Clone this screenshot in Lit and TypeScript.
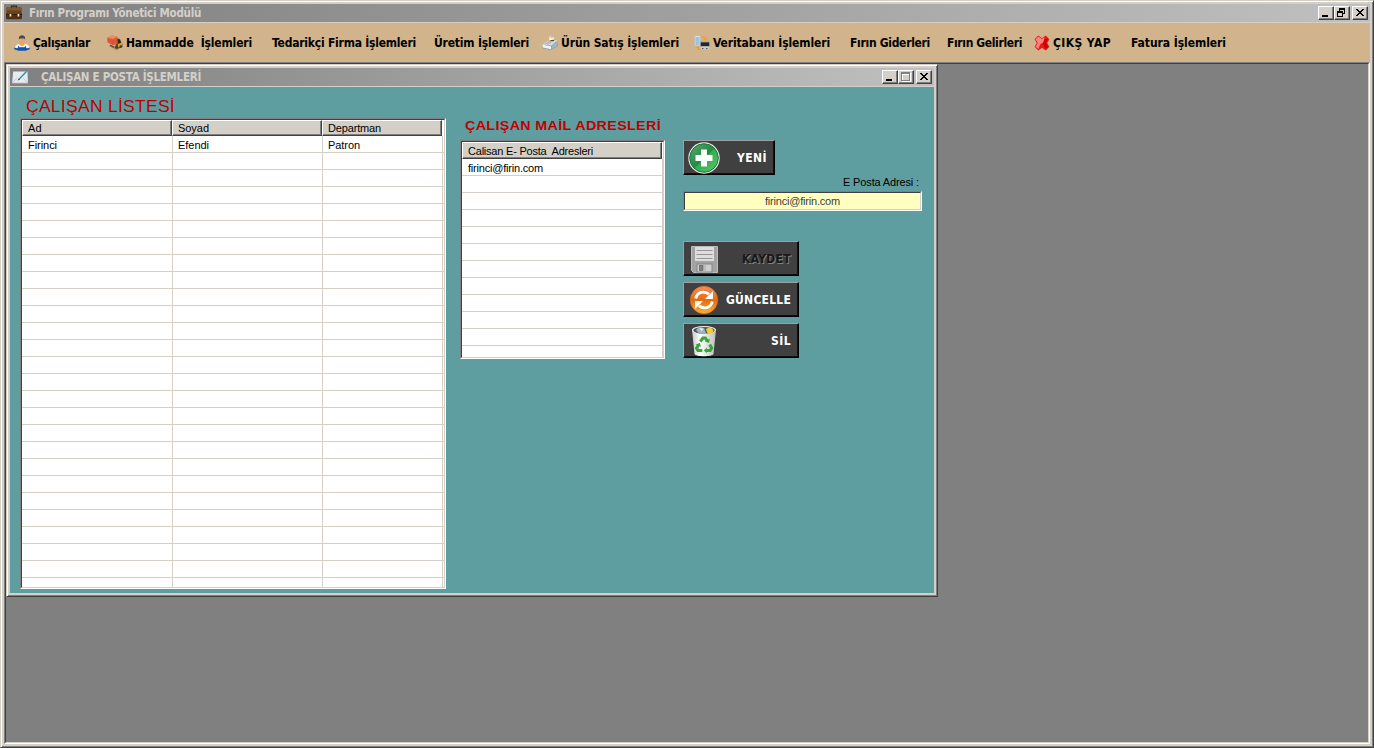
import { LitElement, html, css, svg, nothing } from "lit";
import { customElement, property } from "lit/decorators.js";

/** A line of text whose tracking is adjusted so that it takes up a given width; stretch widens the glyphs first. */
@customElement("fit-label")
class FitLabel extends LitElement {
  @property() text = "";
  @property({ type: Number }) w = 0;
  @property({ type: Number }) stretch = 1;

  static styles = css`
    :host { display: block; flex: none; white-space: pre; }
    .t { display: inline-block; white-space: pre; transform-origin: 0 50%; }
  `;

  firstUpdated() {
    const el = this.renderRoot.querySelector(".t") as HTMLElement;
    const natural = el.getBoundingClientRect().width;
    el.style.letterSpacing = `${(this.w / this.stretch - natural) / this.text.length}px`;
    if (this.stretch !== 1) el.style.transform = `scaleX(${this.stretch})`;
  }

  render() {
    return html`<span class="t">${this.text}</span>`;
  }
}

const icons: Record<string, unknown> = {
  briefcase: svg`
    <path d="M5.500 3V1.200h5V3" fill="none" stroke="#3a2412" stroke-width="1.200"/>
    <rect x="0" y="2.500" width="16" height="11.800" rx="1.200" fill="#4e3018"/>
    <rect x="0" y="2.500" width="16" height="6" rx="1.200" fill="#80592f"/>
    <rect x="1" y="5.500" width="14" height="3.500" fill="#65431f"/>
    <path d="M0 9.500h16" stroke="#2c1808" stroke-width=".8"/>
    <rect x="3.600" y="9" width="1.700" height="2.500" fill="#ffe4b0"/><rect x="11.600" y="9" width="1.700" height="2.500" fill="#ffe4b0"/>`,
  worker: svg`
    <path d="M1 13.500c0-3 2-4.500 4.500-4.800h5c3 .3 5 1.800 5 4.800l-1 1.500h-12.500z" fill="#f1f4f7"/>
    <path d="M4.200 10.500l1.300 1.700h5l1.300-1.700 .9 5h-9.400z" fill="#1a5fb8"/>
    <path d="M.3 12.500c2 1 4 1 5 .3h6c2 .6 3 .5 4.400-.3v1.700c-2 1.700-13.400 1.700-15.400 0z" fill="#0d56b0"/>
    <path d="M5.500 7h5v3L8 11.300 5.500 10z" fill="#e8ac3e"/>
    <rect x="5.200" y="1" width="5.600" height="7.500" rx="2.600" fill="#dca77c"/>
    <path d="M4.900 4.500V3c0-3.700 6.200-3.700 6.200 0v1.500l-1-1H5.900z" fill="#4a4b4a"/>`,
  forklift: svg`
    <path d="M2 11l8 4.500 1-2-4-3z" fill="#8a7a62" opacity=".7"/>
    <path d="M9 3l4 1 1.500 4 1 1v3l-5 2-2-3z" fill="#6a4b1a"/>
    <path d="M10.500 4l2.500 1 1 3-2 2z" fill="#2b2620"/>
    <path d="M11 9l4-1.500v3l-4 2z" fill="#dba233"/>
    <circle cx="9.500" cy="12.300" r="1.500" fill="#4d3a28"/><circle cx="13.800" cy="11.500" r="1.200" fill="#3b352c"/>
    <path d="M.2 2.500L5 .6l5.400 1.200v6.700L6 10.200.5 7.500z" fill="#e05a38"/>
    <path d="M.2 2.500L5 .6l5.400 1.200L6 4z" fill="#f28a6a"/>
    <path d="M6 4v6M.5 5L6 7l4.400-2" stroke="#c9482c" stroke-width=".5" fill="none"/>
    <path d="M3 10l4 2.500" stroke="#5b4634" stroke-width="1.300"/>`,
  register: svg`
    <path d="M0 11l7-4h9v4l-7 4L1 13.500z" fill="#8d9bab"/>
    <path d="M.5 9.500L6 6l9.500-1-6 5.500z" fill="#d5dde6"/>
    <path d="M.5 9.700l8.500 1.500v3L.7 12.500z" fill="#eef2f6"/>
    <path d="M9.500 10.800l6-4.500v4l-6 4z" fill="#a6b4c3"/>
    <path d="M7.500 1.500l4.500.5-.5 4-4.500.5z" fill="#fafafa"/>
    <path d="M6.500 5.500L14 4l-3 3-4 .5z" fill="#e1b435"/>
    <path d="M8.500 5.500h3.500" stroke="#494c50"/><path d="M8.500 2.500l3 .3" stroke="#e3b540"/>
    <path d="M3 9l4-2M5 9.500l4-2" stroke="#8fa1b4" stroke-width=".8"/>`,
  database: svg`
    <rect x="1" y="1" width="5" height="9.500" fill="#e6eef5" stroke="#b9c8d4" stroke-width=".7"/>
    <path d="M1.500 3h4M1.500 5h4M1.500 7h4M1.500 9h4" stroke="#4b9fd6"/>
    <rect x="6.500" y="7" width="9" height="4.500" fill="#25272a" stroke="#999" stroke-width=".8"/>
    <rect x="6.500" y="11.500" width="9" height="2.800" fill="#c8cdd2"/><path d="M8 13.500h1.500M12 13.500h1.500" stroke="#555" stroke-width="1.200"/>
    <path d="M7.500 1.500H10c2 0 2.500 1 2.500 2H14l-2.500 2.500L8.700 4h1.600c0-1-1-.9-2.800-.9z" fill="#f3a21c"/>
    <path d="M6.500 15c-3 .3-3.500-.7-3.700-2H1.500l2.300-2.200L6 13H4.700c.1.700.8.700 1.800.6z" fill="#f3a21c"/>`,
  cross: svg`
    <path d="M4.300.6L8 3.200 11.700.6l3.700 3.600L13.200 8l2.200 3.800-3.700 3.600L8 12.800l-3.700 2.600L.6 11.800 2.800 8 .6 4.200z" fill="#e01a1a"/>
    <path d="M4.400 1.400L8 4l2.500-1.700L9.500 7 6 9.500 4.500 14 1.500 11.700 3.800 8 1.500 4.300z" fill="#ff8080"/>
    <path d="M9 8l2-4 3-.2L12 8l2.500 4-3 2-2-3.500z" fill="#d00000"/>`,
  letter: svg`
    <path d="M1.200 2.500h14.300l.4 11.500H.1z" fill="#e6ebee"/>
    <path d="M.2 13.800L5.300 9M15.700 13.800L11 9" stroke="#b6c2ca" stroke-width=".8"/>
    <path d="M0 14.200h16" stroke="#aab2b8" stroke-width=".8"/>
    <path d="M6.300 10.500l1-1.500L14 2l1.200.8-6.800 7z" fill="#2a86c2"/><path d="M5.500 11.500l1.500-2 1.200 1z" fill="#333"/>`,
  plus: svg`
    <defs><linearGradient id="g" x1="0" y1="0" x2="1" y2="1"><stop offset="0" stop-color="#58a870"/><stop offset=".5" stop-color="#248a40"/><stop offset=".51" stop-color="#36a850"/><stop offset="1" stop-color="#5acb68"/></linearGradient></defs>
    <circle cx="16" cy="16" r="15.700" fill="#e9f3ea"/><circle cx="16" cy="16" r="14.300" fill="url(#g)" stroke="#14763a" stroke-width="1"/>
    <path d="M13 7.500h6V13h5.500v6H19v5.500h-6V19H7.500v-6H13z" fill="#fff"/>`,
  floppy: svg`
    <path d="M3.500 3.500h26v26H5.500l-2-2z" fill="#a3a3a3" stroke="#bdbdbd"/>
    <rect x="7" y="4" width="19" height="14" fill="#dedede"/>
    <path d="M8.500 7.500h16M8.500 11.500h16M8.500 15.500h16" stroke="#969696"/>
    <rect x="9" y="21" width="15" height="8" fill="#cfcfcf" stroke="#858585"/>
    <rect x="11.500" y="22.500" width="3.500" height="5" fill="#808080" stroke="#626262" stroke-width=".7"/>
    <path d="M17 21.500v7" stroke="#aaa"/>`,
  refresh: svg`
    <defs><linearGradient id="o" x1="0" y1="0" x2="0" y2="1"><stop offset="0" stop-color="#f0905a"/><stop offset=".5" stop-color="#e86a10"/><stop offset="1" stop-color="#ffae2e"/></linearGradient></defs>
    <circle cx="16" cy="16" r="13.700" fill="url(#o)" stroke="#d9752c" stroke-width=".6"/>
    <path d="M7.800 14.500C9 8 16.500 6.300 21 10.300" fill="none" stroke="#fff" stroke-width="2.900"/>
    <path d="M25 7v8h-8z" fill="#fff"/>
    <path d="M24.200 17.500C23 24 15.500 25.700 11 21.700" fill="none" stroke="#fff" stroke-width="2.900"/>
    <path d="M7 25v-8h8z" fill="#fff"/>`,
  bin: svg`
    <defs><linearGradient id="b" x1="0" y1="0" x2="1" y2="0"><stop offset="0" stop-color="#c9c9c9"/><stop offset=".35" stop-color="#fff"/><stop offset="1" stop-color="#bdbdbd"/></linearGradient></defs>
    <path d="M4 4.500h24L25.500 29c-1 3-18 3-19 0z" fill="url(#b)"/>
    <ellipse cx="16" cy="5" rx="12" ry="4" fill="#eee"/><ellipse cx="16" cy="5.300" rx="10.800" ry="3.300" fill="#555"/>
    <path d="M8 5l3-3 5 1 2 5-7 .5z" fill="#9fb3c0"/><path d="M11 3l4 .5-1 3z" fill="#e6edf2"/>
    <path d="M18 4l4-2 3.500 3-1 3-5 .5z" fill="#ecd22a"/>
    <g fill="none" stroke="#3aa63a" stroke-width="3.100"><path d="M12.300 16.500l2.700-3.500h2.300l2 3"/><path d="M21.700 19.500l2 3.700-1.500 2.300h-4"/><path d="M14.300 25.500H10l-1.500-2.300 2-3.200"/></g>
    <path d="M21.800 13.500l-.6 4.500-4.300-1.500zM18.800 22.500v5.800l-3-2.900zM7.500 19.800l4.500-2 .8 4.200z" fill="#3aa63a"/>`,
};

const icon = (name: string, cls: string, box = 16) =>
  html`<svg class=${cls} viewBox="0 0 ${box} ${box}">${icons[name]}</svg>`;

@customElement("window-buttons")
class WindowButtons extends LitElement {
  @property() middle = "restore";
  static styles = css`
    :host { display: flex; flex: none; height: 14px; }
    .b { box-sizing: border-box; width: 16px; height: 14px; background: #d4d0c8; border: 1px solid; border-color: #fff #404040 #404040 #fff; box-shadow: inset -1px -1px #808080; }
    .b svg { display: block; width: 14px; height: 12px; }
    .close { margin-left: 2px; }
  `;
  render() {
    return html`
      <div class="b"><svg viewBox="0 0 14 12" shape-rendering="crispEdges"><path d="M3 8h6v2H3z"/></svg></div>
      <div class="b"><svg viewBox="0 0 14 12" shape-rendering="crispEdges">${this.middle === "restore"
        ? svg`<path fill-rule="evenodd" d="M4 1h6v6H8V6h1V3H5v1H4zM2 4h6v6H2zM3 6v3h4V6z"/>`
        : svg`<path fill="#fff" fill-rule="evenodd" d="M3 2h9v9H3zM4 4v6h7V4z"/><path fill="#808080" fill-rule="evenodd" d="M2 1h9v9H2zM3 3v6h7V3z"/>`}</svg></div>
      <div class="b close"><svg viewBox="0 0 14 12" shape-rendering="crispEdges"><path d="M3 2h2v1h1v1h2V3h1V2h2v1h-1v1H9v1H8v1h1v1h1v1h1v1H9V8H8V7H6v1H5v1H3V8h1V7h1V6h1V5H5V4H4V3H3z"/></svg></div>`;
  }
}

interface Cell { text: string; w: number; }
interface Column { width: number; head: Cell; value: Cell; }

@customElement("list-view")
class ListView extends LitElement {
  @property({ attribute: false }) columns: Column[] = [];
  @property({ type: Number }) rows = 1;
  @property({ type: Number }) headHeight = 16;
  static styles = css`
    :host { display: block; box-sizing: border-box; border: 1px solid; border-color: #808080 #fff #fff #808080; font: 11px/14px "Liberation Sans", Arial, sans-serif; color: #000; }
    .inner { box-sizing: border-box; height: 100%; border: 1px solid; border-color: #404040 #d4d0c8 #d4d0c8 #404040; background: #fff; overflow: hidden; }
    .head, .row { display: flex; }
    .h { display: flex; align-items: center; box-sizing: border-box; flex: none; padding-left: 5px; background: #d4d0c8; border: 1px solid; border-color: #fff #404040 #404040 #fff; box-shadow: inset -1px -1px #808080; }
    .c { box-sizing: border-box; flex: none; height: 17px; padding: 2px 0 0 6px; border-right: 1px solid #d4d0c8; border-bottom: 1px solid #d4d0c8; }
    .c + .c { padding-left: 5px; }
    .rest { flex: 1; border-bottom: 1px solid #d4d0c8; }
  `;
  render() {
    return html`<div class="inner">
      <div class="head">${this.columns.map(c => html`<div class="h" style="width:${c.width}px;height:${this.headHeight}px"><fit-label .text=${c.head.text} .w=${c.head.w}></fit-label></div>`)}</div>
      ${Array.from({ length: this.rows }, (_, r) => html`<div class="row">${this.columns.map((c, i) => html`
        <div class="c" style="width:${c.width + (i === 0 ? 1 : 0)}px">${r === 0 ? html`<fit-label .text=${c.value.text} .w=${c.value.w}></fit-label>` : nothing}</div>`)}<div class="rest"></div></div>`)}
    </div>`;
  }
}

const menu = [
  { icon: "worker", lead: 10, gap: 3, text: "Çalışanlar", w: 57 },
  { icon: "forklift", lead: 17, gap: 3, text: "Hammadde  İşlemleri", w: 126 },
  { icon: "", lead: 20, gap: 0, text: "Tedarikçi Firma İşlemleri", w: 144 },
  { icon: "", lead: 18, gap: 0, text: "Üretim İşlemleri", w: 95 },
  { icon: "register", lead: 13, gap: 3, text: "Ürün Satış İşlemleri", w: 118 },
  { icon: "database", lead: 15, gap: 3, text: "Veritabanı İşlemleri", w: 117 },
  { icon: "", lead: 20, gap: 0, text: "Fırın Giderleri", w: 80 },
  { icon: "", lead: 17, gap: 0, text: "Fırın Gelirleri", w: 75 },
  { icon: "cross", lead: 12, gap: 3, text: "ÇIKŞ YAP", w: 58 },
  { icon: "", lead: 20, gap: 0, text: "Fatura İşlemleri", w: 95 },
];

@customElement("app-root")
class AppRoot extends LitElement {
  static styles = css`
    :host { display: block; width: 1374px; height: 748px; }
    .frame { display: flex; flex-direction: column; box-sizing: border-box; background: #d4d0c8; border: 1px solid; border-color: #d4d0c8 #404040 #404040 #d4d0c8; box-shadow: inset 1px 1px #fff, inset -1px -1px #808080; padding: 3px; }
    .main { width: 1374px; height: 748px; }
    .child { width: 932px; height: 533px; }
    .bar { display: flex; align-items: center; flex: none; height: 18px; margin-bottom: 1px; background: linear-gradient(90deg, #808080, #c0c0c0); color: #d4d0c8; font: bold 11.5px/18px "DejaVu Sans Condensed", "DejaVu Sans", Tahoma, sans-serif; }
    .i16 { display: block; flex: none; width: 16px; height: 16px; margin-left: 2px; }
    .name { margin-left: 7px; }
    .name.wide { margin-left: 13px; }
    .bar window-buttons { margin: 0 2px 0 auto; }
    .menu { display: flex; align-items: center; flex: none; height: 39px; background: #d2b48c; font: bold 12px/18px "DejaVu Sans Condensed", "DejaVu Sans", Tahoma, sans-serif; color: #000; }
    .item { display: flex; align-items: center; flex: none; }
    .mi { display: block; flex: none; width: 16px; height: 16px; }
    .mdi { flex: 1; box-sizing: border-box; background: #808080; border: 1px solid; border-color: #808080 #fff #fff #808080; }
    .area { box-sizing: border-box; height: 100%; border: 1px solid; border-color: #404040 #d4d0c8 #d4d0c8 #404040; }
    .body { flex: 1; display: flex; background: #5f9ea0; padding-left: 10px; font-family: "Liberation Sans", Arial, sans-serif; }
    .left { width: 426px; }
    .left h1 { margin: 0; padding: 9px 0 0 6px; height: 22px; font-size: 16.5px; line-height: 20px; font-weight: 400; color: #c00000; }
    .left list-view { height: 471px; }
    .mid { width: 205px; margin-left: 14px; }
    .mid h2 { margin: 0; padding: 30px 0 0 5px; height: 23px; font-size: 13px; line-height: 18px; font-weight: 700; color: #c00000; }
    .mid list-view { height: 219px; }
    .right { width: 239px; margin-left: 18px; padding-top: 53px; }
    .btn { display: flex; align-items: center; box-sizing: border-box; width: 116px; height: 35px; margin-bottom: 6px; padding: 0 7px 0 4px; justify-content: space-between; background: #404040; border: 1px solid; border-color: #a0a0a0 #000 #000 #a0a0a0; box-shadow: inset -1px -1px #101010; color: #fff; font: bold 12px/16px "DejaVu Sans Condensed", "DejaVu Sans", Tahoma, sans-serif; }
    .btn.new { width: 92px; margin: 0; padding-left: 4px; }
    .btn.off { color: #181818; text-shadow: 1px 1px #808080; }
    .i32 { display: block; width: 32px; height: 32px; flex: none; }
    .lbl { display: flex; justify-content: flex-end; padding: 0 3px 2px 0; height: 14px; font-size: 11px; line-height: 14px; color: #000; }
    .field { box-sizing: border-box; height: 20px; margin-bottom: 30px; border: 1px solid; border-color: #808080 #fff #fff #808080; }
    .fin { display: flex; justify-content: center; box-sizing: border-box; height: 18px; border: 1px solid; border-color: #404040 #d4d0c8 #d4d0c8 #404040; background: #ffffc0; font-size: 11px; line-height: 16px; color: #404040; }
  `;

  render() {
    return html`
      <div class="frame main">
        <div class="bar">${icon("briefcase", "i16")}<fit-label class="name" .text=${"Fırın Programı Yönetici Modülü"} .w=${172}></fit-label><window-buttons></window-buttons></div>
        <div class="menu">${menu.map(m => html`
          <div class="item" style="margin-left:${m.lead}px">${m.icon ? icon(m.icon, "mi") : nothing}<fit-label style="margin-left:${m.gap}px" .text=${m.text} .w=${m.w}></fit-label></div>`)}
        </div>
        <div class="mdi"><div class="area">
          <div class="frame child">
            <div class="bar">${icon("letter", "i16")}<fit-label class="name wide" .text=${"ÇALIŞAN E POSTA İŞLEMLERİ"} .w=${160}></fit-label><window-buttons middle="max"></window-buttons></div>
            <div class="body">
              <div class="left">
                <h1><fit-label .text=${"ÇALIŞAN LİSTESİ"} .w=${149} .stretch=${1.06}></fit-label></h1>
                <list-view .rows=${27} .columns=${[
                  { width: 150, head: { text: "Ad", w: 14 }, value: { text: "Firinci", w: 29 } },
                  { width: 150, head: { text: "Soyad", w: 31 }, value: { text: "Efendi", w: 31 } },
                  { width: 120, head: { text: "Departman", w: 53 }, value: { text: "Patron", w: 32 } },
                ]}></list-view>
              </div>
              <div class="mid">
                <h2><fit-label .text=${"ÇALIŞAN MAİL ADRESLERİ"} .w=${196} .stretch=${1.1}></fit-label></h2>
                <list-view .rows=${12} .headHeight=${17} .columns=${[
                  { width: 200, head: { text: "Calisan E- Posta  Adresleri", w: 125 }, value: { text: "firinci@firin.com", w: 75 } },
                ]}></list-view>
              </div>
              <div class="right">
                <div class="btn new">${icon("plus", "i32", 32)}<fit-label .text=${"YENİ"} .w=${30}></fit-label></div>
                <div class="lbl"><fit-label .text=${"E Posta Adresi :"} .w=${76}></fit-label></div>
                <div class="field"><div class="fin"><fit-label .text=${"firinci@firin.com"} .w=${75}></fit-label></div></div>
                <div class="btn off">${icon("floppy", "i32", 32)}<fit-label .text=${"KAYDET"} .w=${49}></fit-label></div>
                <div class="btn">${icon("refresh", "i32", 32)}<fit-label .text=${"GÜNCELLE"} .w=${65}></fit-label></div>
                <div class="btn">${icon("bin", "i32", 32)}<fit-label .text=${"SİL"} .w=${20}></fit-label></div>
              </div>
            </div>
          </div>
        </div></div>
      </div>`;
  }
}
